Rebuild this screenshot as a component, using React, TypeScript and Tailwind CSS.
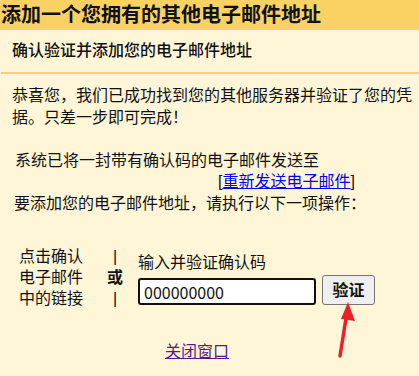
import React from 'react'

const font = { fontFamily: '"Noto Sans CJK SC", "Liberation Sans", sans-serif' }

export default function App() {
  return (
    <div
      className="relative w-[419px] h-[376px] overflow-hidden bg-[#fff6d8] text-[#111] font-['Liberation_Sans','Noto_Sans_CJK_SC',sans-serif]"
    >
      <div className="h-[30px] bg-[#fad163] pl-[1px] text-[20px] font-bold leading-[30px]">
        添加一个您拥有的其他电子邮件地址
      </div>
      <div className="h-[42px] flex items-center pl-[12px] text-[16px] font-medium">
        确认验证并添加您的电子邮件地址
      </div>
      <div className="h-[2px] ml-[1px] bg-[#fad163]" />

      <div className="pl-[12px] pr-[6px] pt-[11px] text-[16px] leading-[21.5px]">
        <p>恭喜您，我们已成功找到您的其他服务器并验证了您的凭据。只差一步即可完成！</p>
        <p className="mt-[21.5px] pl-[3px]">系统已将一封带有确认码的电子邮件发送至</p>
        <p className="pl-[206px]">
          [<a href="#" className="text-[#0000ee] underline">重新发送电子邮件</a>]
        </p>
        <p className="pl-[2px]">要添加您的电子邮件地址，请执行以下一项操作：</p>
      </div>

      <div className="flex items-start mt-[32px] text-[16px] leading-[21px]">
        <div className="pl-[19px] w-[100px]">
          点击确认
          <br />
          电子邮件
          <br />
          中的链接
        </div>
        <div className="w-[30px] flex flex-col items-center">
          <span>|</span>
          <span className="font-bold">或</span>
          <span>|</span>
        </div>
        <div className="ml-[8px] pt-[6px]">
          <div>输入并验证确认码</div>
          <div className="flex items-end gap-[6px] mt-[2px]">
            <input
              defaultValue="000000000"
              className="w-[178px] h-[27px] border-2 border-[#111] rounded-[3px] bg-white px-[4px] text-[16px] outline-none"
              style={font}
            />
            <button className="w-[53px] h-[30px] bg-[#efefef] border border-[#767676] rounded-[3px] text-[16px] font-bold">
              验证
            </button>
          </div>
        </div>
      </div>

      <div className="mt-[32px] pl-[165px] text-[16px] leading-[21px]">
        <a href="#" className="text-[#551a8b] underline">关闭窗口</a>
      </div>

      <svg className="absolute left-0 top-0 pointer-events-none" width="419" height="376">
        <line x1="340" y1="356" x2="347" y2="312" stroke="#e8202a" strokeWidth="3.5" strokeLinecap="round" />
        <polygon points="348,302 355,321 341,319" fill="#e8202a" />
      </svg>
    </div>
  )
}
